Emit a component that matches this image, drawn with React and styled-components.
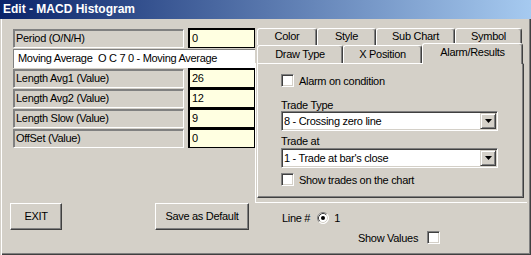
import React from 'react';
import styled, { createGlobalStyle } from 'styled-components';

const Global = createGlobalStyle`
  html, body { margin: 0; padding: 0; background: #D4D0C8; }
  body { font-family: "Liberation Sans", Arial, sans-serif; font-size: 11px; color: #000; }
  * { box-sizing: border-box; }
`;

const Window = styled.div`
  width: 531px;
  height: 255px;
  display: flex;
  flex-direction: column;
  background: #D4D0C8;
  overflow: hidden;
  letter-spacing: -0.3px;
`;

const TitleBar = styled.div`
  flex: none;
  height: 19px;
  padding-left: 3px;
  background: linear-gradient(to right, #0A246A, #A6CAF0);
  color: #fff;
  font-weight: bold;
  font-size: 12px;
  line-height: 19px;
  letter-spacing: 0;
`;

const Body = styled.div`
  flex: 1;
  display: flex;
  padding: 9px 0 0 13px;
  box-shadow: inset 1px 0 0 #D4D0C8, inset 2px 0 0 #fff,
    inset -1px -1px 0 #404040, inset -2px -2px 0 #808080;
`;

const LeftPane = styled.div`
  width: 242px;
  display: flex;
  flex-direction: column;
`;

const FieldGrid = styled.div`
  display: grid;
  grid-template-columns: 171px 67px;
  column-gap: 4px;
  grid-auto-rows: 20px;
`;

const FieldLabel = styled.div`
  margin-top: 1px;
  height: 19px;
  padding-left: 2px;
  border-top: 1px solid #808080;
  border-left: 1px solid #808080;
  border-bottom: 1px solid #fff;
  border-right: 1px solid #fff;
  box-shadow: inset 1px 1px 0 #808080;
  line-height: 17px;
  white-space: nowrap;
  overflow: hidden;
`;

const FieldValue = styled.div`
  height: 20px;
  padding-left: 3px;
  background: #FFFFE1;
  border: 1px solid #000;
  box-shadow: inset 1px 1px 0 #000;
  line-height: 18px;
`;

const WideRow = styled.div`
  grid-column: 1 / -1;
  width: 242px;
  margin-top: 1px;
  height: 19px;
  padding-left: 4px;
  background: #fff;
  border-top: 1px solid #808080;
  border-left: 1px solid #808080;
  line-height: 17px;
  white-space: nowrap;
`;

const ButtonRow = styled.div`
  display: flex;
  margin-top: 55px;
  margin-left: -3px;
`;

const Button = styled.div`
  width: ${p => p.$w}px;
  height: 27px;
  margin-left: ${p => p.$ml || 0}px;
  border-top: 1px solid #fff;
  border-left: 1px solid #fff;
  border-right: 1px solid #404040;
  border-bottom: 1px solid #404040;
  box-shadow: inset -1px -1px 0 #808080;
  display: flex;
  align-items: center;
  justify-content: center;
  padding-bottom: 1px;
`;

const RightPane = styled.div`
  display: flex;
  flex-direction: column;
`;

const TabRow = styled.div`
  display: flex;
  align-items: flex-start;
  margin-left: 2px;
  height: ${p => p.$h}px;
`;

const Tab = styled.div`
  width: ${p => p.$w}px;
  height: ${p => p.$h}px;
  border-top: 1px solid #fff;
  border-left: 1px solid #fff;
  border-right: 1px solid #404040;
  box-shadow: inset -1px 0 0 #808080;
  border-radius: 3px 3px 0 0;
  text-align: center;
  line-height: ${p => p.$h - 2}px;
  background: #D4D0C8;
  white-space: nowrap;
`;

const ActiveTab = styled(Tab)`
  position: relative;
  z-index: 2;
  margin-top: -2px;
  line-height: 14px;
  padding-top: 1px;
`;

const Frame = styled.div`
  width: 272px;
  padding: 0 0 4px 1px;
  border-left: 1px solid #fff;
  border-bottom: 1px solid #fff;
`;

const Panel = styled.div`
  width: 267px;
  height: 135px;
  padding: 10px 0 0 23px;
  border-top: 1px solid #fff;
  border-left: 1px solid #fff;
  border-right: 1px solid #404040;
  border-bottom: 1px solid #404040;
  box-shadow: inset -1px -1px 0 #808080;
  display: flex;
  flex-direction: column;
`;

const CheckRow = styled.div`
  display: flex;
  align-items: center;
  gap: ${p => p.$gap || 5}px;
  height: 13px;
  margin-top: ${p => p.$mt || 0}px;
  padding-left: ${p => p.$pl || 0}px;
  white-space: nowrap;
`;

const CheckBox = styled.div`
  flex: none;
  width: 13px;
  height: 13px;
  background: #fff;
  border-top: 1px solid #808080;
  border-left: 1px solid #808080;
  border-bottom: 1px solid #fff;
  border-right: 1px solid #fff;
  box-shadow: inset 1px 1px 0 #404040, inset -1px -1px 0 #D4D0C8;
`;

const SmallLabel = styled.div`
  margin-top: ${p => p.$mt}px;
  line-height: ${p => p.$lh}px;
  height: ${p => p.$lh}px;
`;

const Select = styled.div`
  width: 217px;
  height: 20px;
  display: flex;
  align-items: center;
  padding: 1px;
  background: #fff;
  border-top: 1px solid #808080;
  border-left: 1px solid #808080;
  border-bottom: 1px solid #fff;
  border-right: 1px solid #fff;
  box-shadow: inset 1px 1px 0 #404040, inset -1px -1px 0 #D4D0C8;
`;

const SelectText = styled.div`
  flex: 1;
  padding-left: 1px;
  white-space: nowrap;
`;

const DropButton = styled.div`
  width: 16px;
  height: 16px;
  background: #D4D0C8;
  border-top: 1px solid #D4D0C8;
  border-left: 1px solid #D4D0C8;
  border-right: 1px solid #404040;
  border-bottom: 1px solid #404040;
  box-shadow: inset 1px 1px 0 #fff, inset -1px -1px 0 #808080;
  display: flex;
  align-items: center;
  justify-content: center;
`;

const LineRow = styled.div`
  display: flex;
  align-items: center;
  height: 13px;
  margin-top: 8px;
  padding-left: 27px;
  white-space: nowrap;
`;

const RadioWrap = styled.span`
  display: inline-flex;
  margin: 0 5px 0 7px;
`;

const Arrow = () => (
  <svg width="7" height="4" viewBox="0 0 7 4">
    <polygon points="0,0 7,0 3.5,4" fill="#000" />
  </svg>
);

const Radio = () => (
  <svg width="12" height="12" viewBox="0 0 12 12">
    <circle cx="6" cy="6" r="5.5" fill="#fff" />
    <path d="M2.11 9.89 A5.5 5.5 0 0 1 9.89 2.11" fill="none" stroke="#808080" />
    <path d="M9.89 2.11 A5.5 5.5 0 0 1 2.11 9.89" fill="none" stroke="#fff" />
    <path d="M2.82 9.18 A4.5 4.5 0 0 1 9.18 2.82" fill="none" stroke="#404040" />
    <path d="M9.18 2.82 A4.5 4.5 0 0 1 2.82 9.18" fill="none" stroke="#D4D0C8" />
    <circle cx="6" cy="6" r="2" fill="#000" />
  </svg>
);

const fields = [
  ['Length Avg1 (Value)', '26'],
  ['Length Avg2 (Value)', '12'],
  ['Length Slow (Value)', '9'],
  ['OffSet (Value)', '0'],
];

export default function App() {
  return (
    <>
      <Global />
      <Window>
        <TitleBar>Edit - MACD Histogram</TitleBar>
        <Body>
          <LeftPane>
            <FieldGrid>
              <FieldLabel>Period (O/N/H)</FieldLabel>
              <FieldValue>0</FieldValue>
              <WideRow>Moving Average&nbsp; O C 7 0 - Moving Average</WideRow>
              {fields.map(([l, v]) => (
                <React.Fragment key={l}>
                  <FieldLabel>{l}</FieldLabel>
                  <FieldValue>{v}</FieldValue>
                </React.Fragment>
              ))}
            </FieldGrid>
            <ButtonRow>
              <Button $w={52}>EXIT</Button>
              <Button $w={94} $ml={93}>Save as Default</Button>
            </ButtonRow>
          </LeftPane>
          <RightPane>
            <TabRow $h={17}>
              <Tab $w={60} $h={17}>Color</Tab>
              <Tab $w={59} $h={17}>Style</Tab>
              <Tab $w={79} $h={17}>Sub Chart</Tab>
              <Tab $w={67} $h={17}>Symbol</Tab>
            </TabRow>
            <TabRow $h={18}>
              <Tab $w={86} $h={18}>Draw Type</Tab>
              <Tab $w={79} $h={18}>X Position</Tab>
              <ActiveTab $w={101} $h={21}>Alarm/Results</ActiveTab>
            </TabRow>
            <Frame>
              <Panel>
                <CheckRow>
                  <CheckBox />
                  <span>Alarm on condition</span>
                </CheckRow>
                <SmallLabel $mt={12} $lh={12}>Trade Type</SmallLabel>
                <Select>
                  <SelectText>8 - Crossing zero line</SelectText>
                  <DropButton><Arrow /></DropButton>
                </Select>
                <SmallLabel $mt={4} $lh={13}>Trade at</SmallLabel>
                <Select>
                  <SelectText>1 - Trade at bar's close</SelectText>
                  <DropButton><Arrow /></DropButton>
                </Select>
                <CheckRow $mt={5}>
                  <CheckBox />
                  <span>Show trades on the chart</span>
                </CheckRow>
              </Panel>
            </Frame>
            <LineRow>
              Line #
              <RadioWrap><Radio /></RadioWrap>
              1
            </LineRow>
            <CheckRow $mt={7} $pl={103} $gap={9}>
              <span>Show Values</span>
              <CheckBox />
            </CheckRow>
          </RightPane>
        </Body>
      </Window>
    </>
  );
}
